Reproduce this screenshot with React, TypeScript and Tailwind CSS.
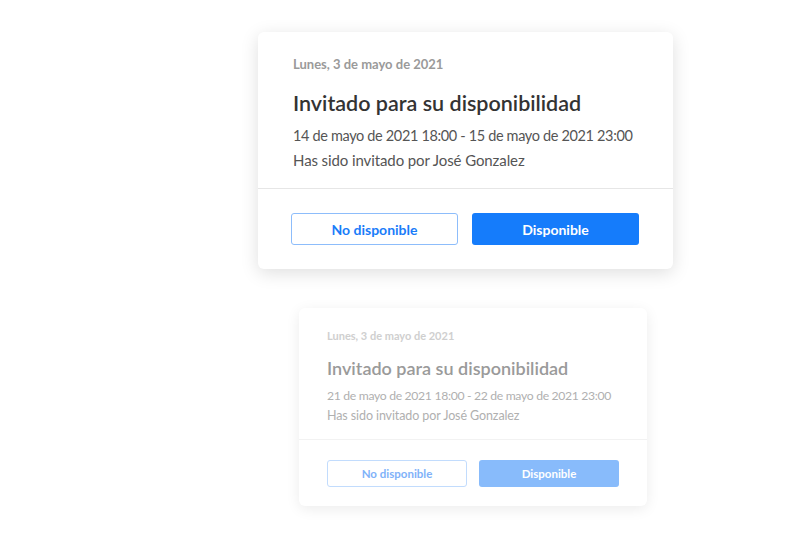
import React from "react";

const font = { fontFamily: '"Lato", "Noto Sans", sans-serif' };

const InviteCard = ({ range }: { range: string }) => (
    <div className="w-[415px] bg-white rounded-md shadow-[0_4px_18px_rgba(0,0,0,0.13)]">
        <div className="px-[35px] pt-[23px] pb-[16px]">
            <p className="text-[13px] font-bold text-[#9a9a9a] leading-[18px]">Lunes, 3 de mayo de 2021</p>
            <h3 className="mt-[16px] text-[21.5px] font-semibold text-[#333] leading-[28px]">Invitado para su disponibilidad</h3>
            <p className="mt-[7px] text-[14.5px] tracking-[-0.35px] text-[#555] leading-[24px] whitespace-nowrap">{range}</p>
            <p className="text-[15px] tracking-[-0.1px] text-[#555] leading-[24px] whitespace-nowrap">Has sido invitado por José Gonzalez</p>
        </div>
        <div className="border-t border-[#e6e6e6] px-[33px] pt-[24px] pb-[24px] flex gap-[14px]">
            <button className="w-[167px] h-[32px] rounded-[3px] border border-[#8dbdfb] text-[#1a7cf9] text-[14px] font-bold">No disponible</button>
            <button className="w-[167px] h-[32px] rounded-[3px] bg-[#157cfb] text-white text-[14px] font-bold">Disponible</button>
        </div>
    </div>
);

const FadedCard = ({ range }: { range: string }) => (
    <div className="w-[348px] bg-white rounded-md shadow-[0_3px_14px_rgba(0,0,0,0.08)]">
        <div className="px-[28px] pt-[20px] pb-[13px]">
            <p className="text-[11px] font-bold text-[#cfcfcf] leading-[15px]">Lunes, 3 de mayo de 2021</p>
            <h3 className="mt-[13px] text-[18px] font-semibold text-[#9a9a9a] leading-[24px]">Invitado para su disponibilidad</h3>
            <p className="mt-[6px] text-[12.2px] tracking-[-0.32px] text-[#b0b0b0] leading-[20px] whitespace-nowrap">{range}</p>
            <p className="text-[12.5px] tracking-[-0.1px] text-[#b0b0b0] leading-[20px] whitespace-nowrap">Has sido invitado por José Gonzalez</p>
        </div>
        <div className="border-t border-[#f2f2f2] px-[28px] pt-[20px] pb-[19px] flex gap-[12px]">
            <button className="w-[140px] h-[27px] rounded-[3px] border border-[#c2dcfd] text-[#7fb2f9] text-[11.5px] font-bold">No disponible</button>
            <button className="w-[140px] h-[27px] rounded-[3px] bg-[#88bbfb] text-white text-[11.5px] font-bold">Disponible</button>
        </div>
    </div>
);

export default function App() {
    return (
        <div className="w-[800px] h-[537px] bg-white overflow-hidden flex flex-col" style={font}>
            <div className="ml-[258px] mt-[32px]">
                <InviteCard range="14 de mayo de 2021 18:00 - 15 de mayo de 2021 23:00" />
            </div>
            <div className="ml-[299px] mt-[39px]">
                <FadedCard range="21 de mayo de 2021 18:00 - 22 de mayo de 2021 23:00" />
            </div>
        </div>
    );
}
